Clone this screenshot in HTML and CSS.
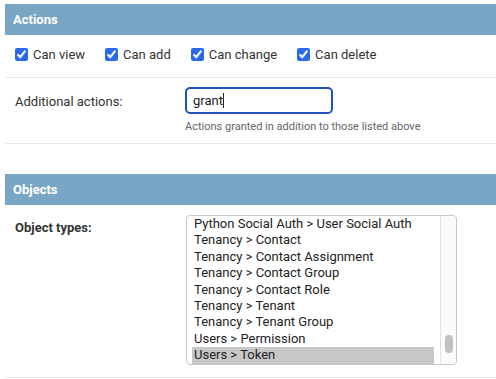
FILE: index.html
```html
<!DOCTYPE html>
<html lang="en">
<head>
    <meta charset="UTF-8">
    <meta name="viewport" content="width=device-width, initial-scale=1.0">
    <title>Change permission</title>
    <link rel="stylesheet" href="styles.css">
</head>
<body>
    <div id="content">
        <fieldset class="module">
            <h2>Actions</h2>
            <div class="form-row checks">
                <label class="check"><input type="checkbox" checked> Can view</label>
                <label class="check"><input type="checkbox" checked> Can add</label>
                <label class="check"><input type="checkbox" checked> Can change</label>
                <label class="check"><input type="checkbox" checked> Can delete</label>
            </div>
            <div class="form-row field-row">
                <label class="field-label" for="id_actions">Additional actions:</label>
                <div class="field-box">
                    <div class="text-input" id="id_actions">grant<span class="caret"></span></div>
                    <div class="help">Actions granted in addition to those listed above</div>
                </div>
            </div>
        </fieldset>

        <fieldset class="module">
            <h2>Objects</h2>
            <div class="form-row field-row objects-row">
                <label class="field-label required">Object types:</label>
                <div class="field-box">
                    <div class="listbox">
                        <ul class="options">
                            <li>Python Social Auth &gt; User Social Auth</li>
                            <li>Tenancy &gt; Contact</li>
                            <li>Tenancy &gt; Contact Assignment</li>
                            <li>Tenancy &gt; Contact Group</li>
                            <li>Tenancy &gt; Contact Role</li>
                            <li>Tenancy &gt; Tenant</li>
                            <li>Tenancy &gt; Tenant Group</li>
                            <li>Users &gt; Permission</li>
                            <li class="selected">Users &gt; Token</li>
                        </ul>
                        <div class="scrollbar"><div class="thumb"></div></div>
                    </div>
                </div>
            </div>
        </fieldset>
    </div>
</body>
</html>
```

FILE: styles.css
```css
body {
    margin: 0;
    font-family: Roboto, "Liberation Sans", sans-serif;
    color: #333;
    background-color: #fff;
    overflow: hidden;
}
#content {
    padding: 4px 0 0 5px;
}
.module {
    margin: 0 0 30px;
    padding: 0;
    border: none;
    min-width: 0;
}
.module:last-child {
    margin-bottom: 0;
}
.module h2 {
    margin: 0;
    padding: 8px;
    font-size: 13px;
    line-height: 15px;
    font-weight: bold;
    color: #fff;
    background-color: #79a6c4;
}
.form-row {
    padding: 10px;
    border-bottom: 1px solid #e8e8e8;
}
.checks {
    display: flex;
    align-items: center;
    gap: 20px;
    height: 19px;
    padding-bottom: 13px;
    font-size: 13px;
}
.check {
    display: flex;
    align-items: center;
    gap: 5px;
}
.check input {
    margin: 0;
    width: 13px;
    height: 13px;
    accent-color: #2a6ae8;
}
.field-row {
    display: flex;
    padding-top: 9px;
}
.field-label {
    width: 170px;
    flex: none;
    padding-top: 7px;
    font-size: 13px;
    line-height: 16px;
}
.field-label.required {
    font-weight: bold;
    padding-top: 5px;
}
.text-input {
    box-sizing: border-box;
    width: 148px;
    height: 27px;
    padding: 0 6px;
    border: 2px solid #2450c0;
    border-radius: 5px;
    font-size: 13px;
    line-height: 23px;
    color: #222;
}
.caret {
    display: inline-block;
    width: 1px;
    height: 15px;
    vertical-align: -3px;
    background-color: #222;
}
.help {
    margin-top: 6px;
    font-size: 11px;
    line-height: 13px;
    color: #666;
}
.objects-row {
    padding-top: 10px;
    padding-bottom: 12px;
}
.listbox {
    display: flex;
    box-sizing: border-box;
    width: 271px;
    height: 150px;
    margin-left: 1px;
    border: 1px solid #c8c8c8;
    border-radius: 4px;
    overflow: hidden;
}
.options {
    flex: 1;
    margin: 0;
    padding: 0 6px 0 5px;
    list-style: none;
    font-size: 13px;
    line-height: 16.4px;
    color: #222;
}
.options li {
    padding: 0 2px;
    white-space: nowrap;
}
.options li.selected {
    background-color: #c8c8c8;
}
.scrollbar {
    display: flex;
    flex-direction: column;
    justify-content: flex-end;
    align-items: center;
    width: 15px;
    padding-bottom: 11px;
    border-left: 1px solid #e2e2e2;
    background-color: #fafafa;
}
.thumb {
    width: 8px;
    height: 18px;
    border-radius: 4px;
    background-color: #c1c1c1;
}
```
